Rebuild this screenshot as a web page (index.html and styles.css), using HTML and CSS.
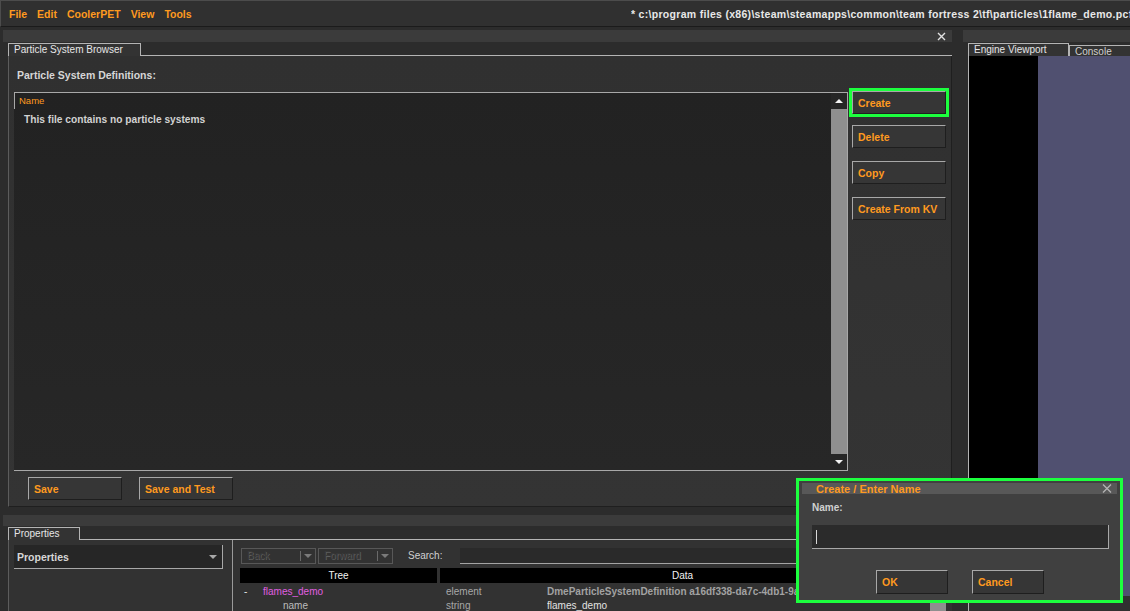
FILE: index.html
```html
<!DOCTYPE html>
<html>
<head>
<meta charset="utf-8">
<title>CoolerPET</title>
<link rel="stylesheet" href="styles.css">
</head>
<body>
<div class="app">
  <header class="menubar">
    <nav class="menu"><span>File</span><span>Edit</span><span>CoolerPET</span><span>View</span><span>Tools</span></nav>
    <div class="doc-title">* c:\program files (x86)\steam\steamapps\common\team fortress 2\tf\particles\1flame_demo.pcf</div>
  </header>

  <div class="workspace">
    <div class="leftcol">
      <section class="dock dock-top">
        <div class="dock-strip">
          <svg class="close-x" width="9" height="9" viewBox="0 0 9 9"><path d="M1 1L8 8M8 1L1 8" stroke="#e2e2e2" stroke-width="1.4" fill="none"/></svg>
        </div>
        <div class="frame">
          <div class="tabrow"><div class="tab tab-browser">Particle System Browser</div><div class="tab-fill"></div></div>
          <div class="frame-body browser">
            <div class="section-label">Particle System Definitions:</div>
            <div class="browser-main">
              <div class="listbox">
                <div class="list-area">
                  <div class="list-header">Name</div>
                  <div class="list-empty">This file contains no particle systems</div>
                </div>
                <div class="vscroll">
                  <div class="arrow"><span class="tri-up"></span></div>
                  <div class="track"></div>
                  <div class="arrow"><span class="tri-down"></span></div>
                </div>
              </div>
              <div class="side-buttons">
                <button class="btn highlighted">Create</button>
                <button class="btn">Delete</button>
                <button class="btn">Copy</button>
                <button class="btn">Create From KV</button>
              </div>
            </div>
            <div class="save-row">
              <button class="btn">Save</button>
              <button class="btn">Save and Test</button>
            </div>
          </div>
        </div>
      </section>

      <section class="dock dock-bottom">
        <div class="dock-strip"></div>
        <div class="frame frame-bottom">
          <div class="tabrow"><div class="tab tab-props">Properties</div><div class="tab-fill"></div></div>
          <div class="frame-body props">
            <div class="props-left">
              <div class="dropdown"><span>Properties</span><span class="caret"></span></div>
            </div>
            <div class="props-right">
              <div class="toolbar">
                <div class="combo"><span class="combo-text">Back</span><span class="combo-div"></span><span class="combo-caret"></span></div>
                <div class="combo combo-fwd"><span class="combo-text">Forward</span><span class="combo-div"></span><span class="combo-caret"></span></div>
                <span class="search-label">Search:</span>
                <div class="search-input"></div>
              </div>
              <div class="tree">
                <div class="tree-main">
                  <div class="tree-head"><div class="th th-tree">Tree</div><div class="th th-data">Data</div></div>
                  <div class="tree-row">
                    <div class="c-tree"><span class="expander">-</span><span class="node-name">flames_demo</span></div>
                    <div class="c-type">element</div>
                    <div class="c-value strong">DmeParticleSystemDefinition a16df338-da7c-4db1-9a3e-6f0c2b7d5e11</div>
                  </div>
                  <div class="tree-row">
                    <div class="c-tree"><span class="attr-name">name</span></div>
                    <div class="c-type">string</div>
                    <div class="c-value">flames_demo</div>
                  </div>
                </div>
                <div class="tree-scroll"><div class="tree-scroll-arrow"></div><div class="tree-scroll-track"></div></div>
              </div>
            </div>
          </div>
        </div>
      </section>
    </div>

    <div class="rightcol">
      <div class="dock-strip"></div>
      <div class="frame frame-right">
        <div class="tabrow">
          <div class="tab tab-active">Engine Viewport</div>
          <div class="tab tab-inactive">Console</div>
        </div>
        <div class="frame-body viewport-body">
          <div class="viewport">
            <div class="vp-black"></div>
            <div class="vp-scene"></div>
          </div>
        </div>
      </div>
    </div>
  </div>

  <div class="dialog">
    <div class="dlg-title">
      <span>Create / Enter Name</span>
      <svg width="10" height="9" viewBox="0 0 10 9"><path d="M1 0.5L9 8.5M9 0.5L1 8.5" stroke="#b4b4b4" stroke-width="1.3" fill="none"/></svg>
    </div>
    <div class="dlg-body">
      <div class="dlg-label">Name:</div>
      <div class="dlg-input"><span class="cursor"></span></div>
      <div class="dlg-buttons">
        <button class="btn btn-dlg">OK</button>
        <button class="btn btn-dlg">Cancel</button>
      </div>
    </div>
  </div>
</div>
</body>
</html>
```

FILE: styles.css
```css
* { box-sizing: border-box; }
html, body { margin: 0; padding: 0; }
body {
  width: 1130px;
  height: 611px;
  overflow: hidden;
  background: #2c2c2c;
  font-family: "Liberation Sans", Arial, sans-serif;
  font-size: 10px;
  color: #d8d8d8;
}
.app {
  position: relative;
  width: 1130px;
  height: 611px;
  display: flex;
  flex-direction: column;
}

/* menu bar */
.menubar {
  height: 27px;
  flex: none;
  display: flex;
  align-items: center;
  background: #303030;
  border-top: 1px solid #4c4c4c;
  border-left: 1px solid #4c4c4c;
  border-bottom: 1px solid #1b1b1b;
}
.menu {
  display: flex;
  gap: 10px;
  padding-left: 8px;
  font-weight: bold;
  font-size: 10.5px;
  color: #ff9a1f;
}
.doc-title {
  margin-left: auto;
  width: 499px;
  white-space: nowrap;
  overflow: hidden;
  font-weight: bold;
  font-size: 10.5px;
  letter-spacing: 0.3px;
  color: #e8e8e8;
}

/* layout */
.workspace { flex: 1; display: flex; min-height: 0; }
.leftcol { flex: none; width: 949px; margin-left: 3px; display: flex; flex-direction: column; }
.rightcol { flex: 1; min-width: 0; margin-left: 11px; display: flex; flex-direction: column; }

.dock-strip {
  height: 12px;
  flex: none;
  background: #3b3b3b;
  display: flex;
  justify-content: flex-end;
  align-items: center;
  padding-right: 6px;
}
.dock-top > .dock-strip, .rightcol > .dock-strip { margin-top: 3px; }
.dock-bottom > .dock-strip { margin-top: 8px; height: 11px; }

.frame { margin-left: 5px; margin-top: 1px; display: flex; flex-direction: column; }
.tabrow { display: flex; height: 13px; flex: none; }
.tab {
  flex: none;
  height: 13px;
  padding: 0 0 0 5px;
  border: 1px solid #b4b4b4;
  border-bottom: none;
  background: #333;
  color: #e6e6e6;
  font-size: 10px;
  line-height: 11px;
  white-space: nowrap;
  overflow: hidden;
}
.tab-browser { width: 133px; }
.tab-props { width: 72px; }
.tab-fill { flex: 1; border-bottom: 1px solid #b4b4b4; }
.frame-body {
  background: #323232;
  border-left: 1px solid #5c5c5c;
}

/* browser */
.browser {
  height: 451px;
  padding: 13px 0 6px 5px;
  border-right: 1px solid #1f1f1f;
  border-bottom: 1px solid #1f1f1f;
  background: linear-gradient(180deg, #303030, #343434);
}
.section-label {
  margin-left: 3px;
  height: 12px;
  line-height: 12px;
  font-weight: bold;
  font-size: 10.5px;
  color: #d6d6d6;
}
.browser-main { margin-top: 10px; height: 380px; display: flex; }
.listbox {
  margin-top: 1px;
  width: 834px;
  height: 379px;
  display: flex;
  background: linear-gradient(180deg, #222, #272727);
  border-top: 1px solid #a8a8a8;
  border-right: 1px solid #a8a8a8;
  border-bottom: 1px solid #a8a8a8;
}
.list-area { flex: 1; }
.list-header {
  height: 16px;
  border-left: 1px solid #a8a8a8;
  padding-left: 4px;
  line-height: 15px;
  font-size: 9.5px;
  color: #ff9a1f;
}
.list-empty {
  margin-top: 5px;
  padding-left: 10px;
  line-height: 12px;
  font-weight: bold;
  font-size: 10.2px;
  color: #d2d2d2;
}
.vscroll { width: 16px; display: flex; flex-direction: column; }
.vscroll .arrow {
  height: 16px;
  background: #262626;
  display: flex;
  align-items: center;
  justify-content: center;
}
.vscroll .track { flex: 1; background: #8f8f8f; }
.tri-up {
  width: 0; height: 0;
  border-left: 4px solid transparent;
  border-right: 4px solid transparent;
  border-bottom: 4px solid #f2f2f2;
}
.tri-down {
  width: 0; height: 0;
  border-left: 4px solid transparent;
  border-right: 4px solid transparent;
  border-top: 4px solid #f2f2f2;
}

.side-buttons {
  width: 101px;
  padding-left: 4px;
  display: flex;
  flex-direction: column;
  gap: 13px;
}
.side-buttons .highlighted { margin-bottom: -2px; }

.btn {
  display: block;
  width: 94px;
  height: 23px;
  margin: 0;
  padding: 0 0 0 5px;
  text-align: left;
  background: #363636;
  border: 1px solid;
  border-color: #a8a8a8 #1e1e1e #1e1e1e #a8a8a8;
  font-family: "Liberation Sans", Arial, sans-serif;
  font-weight: bold;
  font-size: 10.5px;
  color: #ff9a1f;
}
.highlighted { outline: 3px solid #1cff3e; outline-offset: 0; }

.save-row { margin-top: 6px; padding-left: 14px; display: flex; gap: 17px; }

/* properties */
.props {
  flex: 1;
  display: flex;
  background: #323232;
}
.props-left {
  flex: none;
  width: 224px;
  padding: 5px 0 0 5px;
  border-right: 1px solid #9a9a9a;
}
.dropdown {
  width: 209px;
  height: 24px;
  background: #262626;
  border-right: 1px solid #a8a8a8;
  border-bottom: 1px solid #a8a8a8;
  display: flex;
  align-items: center;
  justify-content: space-between;
  padding: 0 5px 0 3px;
  font-weight: bold;
  font-size: 10.5px;
  color: #d6d6d6;
}
.caret {
  width: 0; height: 0;
  border-left: 4px solid transparent;
  border-right: 4px solid transparent;
  border-top: 4px solid #a8a8a8;
}
.props-right { flex: 1; min-width: 0; padding-left: 7px; display: flex; flex-direction: column; }
.toolbar { margin-top: 7px; height: 17px; display: flex; align-items: center; }
.combo {
  flex: none;
  margin-left: 1px;
  width: 75px;
  height: 16px;
  border: 1px solid #585858;
  display: flex;
  align-items: center;
  padding-left: 5px;
}
.combo-fwd { margin-left: 2px; }
.combo-text {
  flex: 1;
  font-size: 10px;
  color: #3a3a3a;
  text-shadow: 1px 1px 0 #5e5e5e;
}
.combo-div { width: 1px; height: 10px; background: #6a6a6a; margin-right: 3px; }
.combo-caret {
  width: 0; height: 0;
  margin-right: 3px;
  border-left: 4px solid transparent;
  border-right: 4px solid transparent;
  border-top: 4px solid #7a7a7a;
}
.search-label { margin-left: 15px; font-size: 10px; color: #d0d0d0; }
.search-input {
  margin-left: 18px;
  margin-right: 6px;
  flex: 1;
  height: 16px;
  background: #2a2a2a;
  border-bottom: 1px solid #a4a4a4;
}
.tree { margin-top: 4px; flex: 1; display: flex; }
.tree-main { flex: 1; min-width: 0; }
.tree-head { display: flex; height: 15px; }
.th {
  background: #000;
  color: #f2f2f2;
  font-size: 10px;
  line-height: 15px;
  text-align: center;
}
.th-tree { flex: none; width: 197px; }
.th-data { flex: 1; margin-left: 3px; }
.tree-row {
  display: flex;
  height: 14px;
  line-height: 14px;
  font-size: 10px;
  white-space: nowrap;
}
.tree-head + .tree-row { margin-top: 2px; }
.c-tree { flex: none; width: 206px; padding-left: 4px; display: flex; }
.expander { width: 19px; color: #e8e8e8; }
.node-name { color: #e05ee0; }
.attr-name { padding-left: 39px; color: #bcbcbc; }
.c-type { flex: none; width: 101px; color: #a8a8a8; }
.c-value { flex: 1; min-width: 0; overflow: hidden; color: #e2e2e2; }
.c-value.strong { font-weight: bold; color: #a2a2a2; }
.tree-scroll { flex: none; width: 16px; margin: 15px 6px 0 5px; display: flex; flex-direction: column; }
.tree-scroll-arrow { height: 15px; background: #262626; }
.tree-scroll-track { flex: 1; background: #8f8f8f; }

/* right panel */
.frame-right { flex: 1; }
.tab-active { width: 101px; }
.tab-inactive {
  flex: 1;
  min-width: 0;
  margin-top: 2px;
  height: 11px;
  border-right: none;
  color: #d0d0d0;
  line-height: 11px;
}
.viewport-body {
  flex: 1;
  border-left: 1px solid #b4b4b4;
  background: #303030;
}
.viewport { height: 540px; display: flex; }
.vp-black { width: 69px; background: #000; }
.vp-scene { flex: 1; background: #505070; }

/* dialog */
.dialog {
  position: absolute;
  left: 796px;
  top: 478px;
  width: 327px;
  height: 125px;
  border: 3px solid #1cff3e;
  background: #404040;
  padding: 2px 3px;
}
.dlg-title {
  height: 11px;
  background: #585858;
  display: flex;
  align-items: center;
  justify-content: space-between;
  padding: 0 5px 0 14px;
  font-weight: bold;
  font-size: 11px;
  color: #ff9a1f;
}
.dlg-body { padding-left: 10px; }
.dlg-label {
  margin-top: 8px;
  height: 12px;
  line-height: 12px;
  font-weight: bold;
  font-size: 10px;
  color: #d0d0d0;
}
.dlg-input {
  margin-top: 11px;
  width: 297px;
  height: 24px;
  background: #2b2b2b;
  border-right: 1px solid #a8a8a8;
  border-bottom: 1px solid #a8a8a8;
  padding: 5px 0 0 4px;
}
.cursor { display: block; width: 1px; height: 14px; background: #d8d8d8; }
.dlg-buttons { margin-top: 21px; padding-left: 64px; display: flex; gap: 24px; }
.btn-dlg { width: 72px; height: 24px; }
```
